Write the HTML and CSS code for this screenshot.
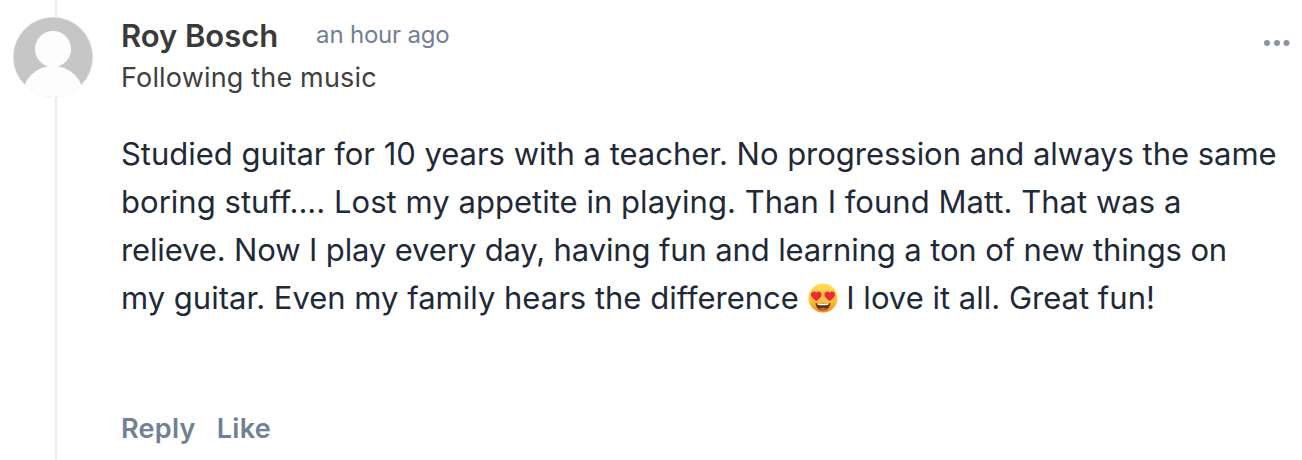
FILE: index.html
```html
<!DOCTYPE html>
<html lang="en">
<head>
<meta charset="utf-8">
<title>Comment</title>
<link rel="stylesheet" href="styles.css">
</head>
<body>
<div class="comment">
  <div class="thread"></div>
  <svg class="avatar" width="80" height="80" viewBox="0 0 80 80" aria-hidden="true">
    <defs><clipPath id="c"><circle cx="40" cy="40" r="40"/></clipPath></defs>
    <circle cx="40" cy="40" r="39.700" fill="#c6c6c6" stroke="#d5e8d5" stroke-width="0.6"/>
    <g clip-path="url(#c)" fill="#fdfdfd">
      <circle cx="40" cy="32" r="18"/>
      <ellipse cx="40" cy="80" rx="31" ry="31"/>
    </g>
  </svg>
  <div class="main">
    <div class="head">
      <div class="who">
        <div class="title-row">
          <span class="name">Roy Bosch</span>
          <span class="time">an hour ago</span>
        </div>
        <div class="tagline">Following the music</div>
      </div>
      <svg class="more" width="26" height="6" viewBox="0 0 26 6" aria-hidden="true">
        <circle cx="3" cy="3" r="3"/><circle cx="13" cy="3" r="3"/><circle cx="22.500" cy="3" r="3"/>
      </svg>
    </div>
    <div class="body">
      <div class="line-a">Studied guitar for 10 years with a teacher. No progression and always the same</div>
      <div class="line-b">boring stuff.... Lost my appetite in playing. Than I found Matt. That was a</div>
      <div class="line-c">relieve. Now I play every day, having fun and learning a ton of new things on</div>
      <div class="line-d">my guitar. Even my family hears the difference <svg class="emoji" width="30" height="30" viewBox="0 0 30 30" role="img" aria-label="smiling face with heart eyes">
        <defs><linearGradient id="f" x1="0" y1="0" x2="0" y2="1"><stop offset="0" stop-color="#ffdd55"/><stop offset="0.6" stop-color="#fdbf35"/><stop offset="1" stop-color="#f08a1d"/></linearGradient></defs>
        <circle cx="15" cy="15" r="14.500" fill="url(#f)"/>
        <path d="M7.500 20c2 .8 13 .8 15 0-.3 4-3.300 7.500-7.500 7.500s-7.200-3.500-7.500-7.500z" fill="#5d3510"/>
        <path d="M9 20.300c3 .5 9 .5 12 0-.2 1-.7 1.500-1.300 1.600-2.500.3-6.900.3-9.400 0-.6-.1-1.100-.6-1.300-1.600z" fill="#fff"/>
        <path d="M11 25.500c1.500-1 6.500-1 8 0-1 1.200-2.500 1.700-4 1.700s-3-.5-4-1.700z" fill="#d8562f"/>
        <path d="M8.300 18C5.500 15.800 2.600 14 3 11c.4-2.500 3.700-3.400 5.300-1 1.600-2.400 4.900-1.500 5.300 1 .4 3-2.500 4.800-5.300 7z" fill="#e82a3c"/>
        <path d="M21.700 18c2.800-2.200 5.700-4 5.300-7-.4-2.500-3.700-3.400-5.300-1-1.600-2.400-4.900-1.500-5.300 1-.4 3 2.500 4.800 5.300 7z" fill="#e82a3c"/>
      </svg> I love it all. Great fun!</div>
    </div>
    <div class="actions">
      <span class="action">Reply</span>
      <span class="action">Like</span>
    </div>
  </div>
</div>
</body>
</html>
```
FILE: styles.css
```css
* { box-sizing: border-box; }
html, body { margin: 0; padding: 0; background: #fff; }
body { font-family: Inter, "Liberation Sans", sans-serif; }
.comment {
  position: relative;
  display: flex;
  width: 1302px;
  height: 460px;
  padding: 17px 24px 0 13px;
  gap: 28px;
}
.thread {
  position: absolute;
  left: 55px;
  top: 0;
  bottom: 0;
  width: 2px;
  background: #ececec;
}
.avatar { position: relative; flex: none; display: block; }
.main { flex: 1; min-width: 0; display: flex; flex-direction: column; }
.head { display: flex; justify-content: space-between; align-items: flex-start; }
.title-row { display: flex; align-items: center; gap: 38px; height: 38px; }
.name { font-size: 31px; font-weight: 600; letter-spacing: -0.05px; line-height: 38px; color: #3a3a3a; }
.time { font-size: 24px; letter-spacing: -0.2px; line-height: 30px; margin-bottom: 2px; color: #718096; }
.tagline { font-size: 27px; letter-spacing: 0.17px; line-height: 44px; margin-top: 1px; color: #3f3f3f; }
.more { fill: #8a94a6; margin-top: 23px; margin-right: -12px; }
.body {
  margin-top: 30px;
  font-size: 31px;
  line-height: 48px;
  white-space: nowrap;
  color: #1f2937;
}
.line-a { letter-spacing: -0.025px; }
.line-b { letter-spacing: 0.03px; }
.line-c { letter-spacing: -0.13px; }
.emoji { vertical-align: -4px; }
.actions { display: flex; gap: 21px; margin-top: 87px; }
.action { font-size: 27px; font-weight: 600; letter-spacing: 0.3px; line-height: 40px; color: #718096; }
```
